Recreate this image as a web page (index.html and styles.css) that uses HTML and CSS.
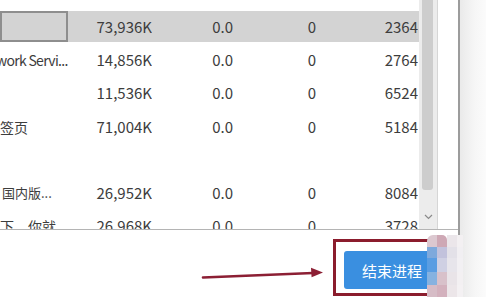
FILE: index.html
```html
<!DOCTYPE html>
<html lang="zh-CN">
<head>
<meta charset="utf-8">
<title>任务管理器</title>
<link rel="stylesheet" href="styles.css">
</head>
<body>
<div class="window">
  <div class="main">
    <div class="list">
      <div class="rows">
        <div class="row selected">
          <div class="cell name"><span class="focus"></span></div>
          <div class="cell num">73,936K</div>
          <div class="cell num">0.0</div>
          <div class="cell num">0</div>
          <div class="cell num">2364</div>
        </div>
        <div class="row">
          <div class="cell name"><span class="label shift">work Servi...</span></div>
          <div class="cell num">14,856K</div>
          <div class="cell num">0.0</div>
          <div class="cell num">0</div>
          <div class="cell num">2764</div>
        </div>
        <div class="row">
          <div class="cell name"></div>
          <div class="cell num">11,536K</div>
          <div class="cell num">0.0</div>
          <div class="cell num">0</div>
          <div class="cell num">6524</div>
        </div>
        <div class="row">
          <div class="cell name"><span class="label">签页</span></div>
          <div class="cell num">71,004K</div>
          <div class="cell num">0.0</div>
          <div class="cell num">0</div>
          <div class="cell num">5184</div>
        </div>
        <div class="row">
          <div class="cell name"></div>
          <div class="cell num"></div>
          <div class="cell num"></div>
          <div class="cell num"></div>
          <div class="cell num"></div>
        </div>
        <div class="row">
          <div class="cell name"><span class="label shift2">r 国内版...</span></div>
          <div class="cell num">26,952K</div>
          <div class="cell num">0.0</div>
          <div class="cell num">0</div>
          <div class="cell num">8084</div>
        </div>
        <div class="row">
          <div class="cell name"><span class="label">下，你就</span></div>
          <div class="cell num">26,968K</div>
          <div class="cell num">0.0</div>
          <div class="cell num">0</div>
          <div class="cell num">3728</div>
        </div>
      </div>
      <div class="scrollbar">
        <div class="thumb"></div>
        <svg class="down" width="9" height="6" viewBox="0 0 9 6"><path d="M1 1 L4.5 4.5 L8 1" fill="none" stroke="#8a8a8a" stroke-width="1.2"/></svg>
      </div>
    </div>
    <div class="footer">
      <button class="end-btn">结束进程</button>
    </div>
  </div>
  <div class="side"><div class="side-line"></div></div>
</div>

<div class="redbox"></div>
<svg class="arrow" width="486" height="297" viewBox="0 0 486 297">
  <line x1="203" y1="277.5" x2="313" y2="273" stroke="#8c1f34" stroke-width="2.6" stroke-linecap="round"/>
  <polygon points="323,272.4 311,267.8 311.6,277.2" fill="#8c1f34"/>
</svg>
<div class="mosaic">
  <span class="a1"></span><span class="b1"></span><span class="c1"></span><span class="d1"></span>
  <span class="a2"></span><span class="b2"></span><span class="c2"></span><span class="d2"></span>
  <span class="a3"></span><span class="b3"></span><span class="c3"></span><span class="d3"></span>
  <span class="a4"></span><span class="b4"></span><span class="c4"></span><span class="d4"></span>
  <span class="a5"></span><span class="b5"></span><span class="c5"></span><span class="d5"></span>
</div>
</body>
</html>
```

FILE: styles.css
```css
* { box-sizing: border-box; }
html, body {
  margin: 0;
  padding: 0;
  width: 486px;
  height: 297px;
  overflow: hidden;
  background: #ffffff;
}
body {
  position: relative;
  font-family: "Noto Sans CJK SC", "Noto Sans", sans-serif;
  font-size: 15px;
  color: #3d3d3d;
}
.window {
  display: flex;
  width: 486px;
  height: 297px;
}
.main {
  width: 458px;
  display: flex;
  flex-direction: column;
}
.list {
  height: 230px;
  display: flex;
  border-bottom: 1px solid #b4b4b4;
}
.rows {
  width: 419px;
  overflow: hidden;
  padding-top: 10px;
}
.row {
  height: 33.3px;
  display: grid;
  grid-template-columns: 68px 84px 81px 83px 102px;
  align-items: center;
}
.row.selected {
  background: #d3d3d3;
  background-clip: content-box;
  padding: 1px 0;
}
.cell {
  white-space: nowrap;
  overflow: hidden;
  line-height: 20px;
}
.cell.num { text-align: right; }
.cell.name {
  height: 100%;
  display: flex;
  align-items: center;
  overflow: visible;
}
.label { display: block; font-size: 14px; }
.label.shift { margin-left: -4px; letter-spacing: -0.7px; }
.label.shift2 { margin-left: -6px; font-size: 13px; }
.focus {
  display: block;
  width: 68px;
  height: 100%;
  border: 2px solid #8e8e8e;
}
.scrollbar {
  width: 19px;
  background: #ececec;
  border-right: 1px solid #d6d6d6;
  position: relative;
  padding-left: 3px;
}
.thumb {
  width: 11px;
  height: 190px;
  background: #cdcdcd;
  border-radius: 0 0 3px 3px;
}
.down {
  position: absolute;
  left: 5px;
  top: 214px;
}
.footer {
  flex: 1;
  display: flex;
  justify-content: flex-end;
  align-items: flex-start;
  padding: 21px 20px 0 0;
}
.end-btn {
  width: 94px;
  height: 38px;
  border: none;
  border-radius: 3px;
  background: #3a8fe0;
  color: #ffffff;
  font-family: "Noto Sans CJK SC", sans-serif;
  font-size: 15px;
  text-align: left;
  padding: 0 0 0 18px;
}
.side {
  flex: 1;
  background: linear-gradient(to right, #e8e8e8, #f6f6f6 60%, #fbfbfb);
}
.side-line {
  height: 243px;
  border-left: 2px solid #9c9c9c;
}
.redbox {
  position: absolute;
  left: 333px;
  top: 239px;
  width: 98px;
  height: 57px;
  border: 3px solid #8b1c2d;
}
.arrow {
  position: absolute;
  left: 0;
  top: 0;
  pointer-events: none;
}
.mosaic {
  position: absolute;
  left: 427px;
  top: 235px;
  display: grid;
  grid-template-columns: 10px 10px 10px 6px;
  grid-template-rows: 12px 11px 14px 13px 12px;
}
.mosaic span { display: block; }
.a1 { background: #dcc8d0; border-top-left-radius: 6px; }
.a2 { background: #7ea9dc; }
.a3 { background: #5a9de2; }
.a4 { background: #86b2e0; }
.a5 { background: #d6bcc6; }
.b1 { background: #cea8b5; border-top-right-radius: 5px; }
.b2 { background: #c2c2dc; }
.b3 { background: #cfd0e3; }
.b4 { background: #d8c1ca; }
.b5 { background: #d3b1bd; }
.c1 { background: #ebe6ea; }
.c2 { background: #e3e1e8; }
.c3 { background: #e7e5eb; }
.c4 { background: #e9e4e8; }
.c5 { background: #ece6e9; }
.d1 { background: #f3f0f2; }
.d2 { background: #f1eff2; }
.d3 { background: #f2f0f3; }
.d4 { background: #f3f0f2; }
.d5 { background: #f4f1f3; }
```
